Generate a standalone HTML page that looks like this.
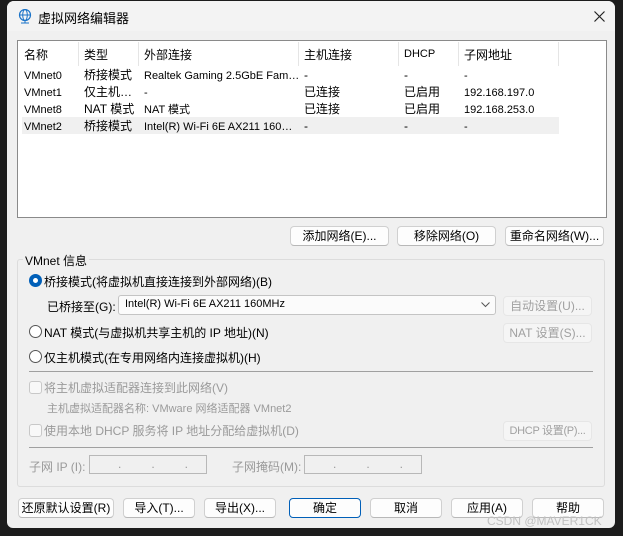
<!DOCTYPE html>
<html><head><meta charset="utf-8"><style>
*{box-sizing:border-box;margin:0;padding:0}
body{width:623px;height:536px;background:#1c1c1c;position:relative;overflow:hidden;font-family:"Liberation Sans","Noto Sans CJK SC",sans-serif;font-size:12px;color:#000}
.a{position:absolute;white-space:nowrap}
#win{position:absolute;left:7px;top:1px;width:608px;height:527px;background:#f0f0f0;border-radius:7px 7px 6px 6px;overflow:hidden}
#title{position:absolute;left:0;top:0;width:608px;height:30px;background:#f3f3f3}
.btn{position:absolute;height:20px;border:1px solid #d0d0d0;border-bottom-color:#b8b8b8;border-radius:4px;background:#fdfdfd;text-align:center;line-height:18px;font-size:12px;white-space:nowrap;overflow:hidden}
.dis{color:#a0a0a0;background:#f5f5f5;border-color:#e6e6e6}
.g{color:#9a9a9a}
.radio{position:absolute;width:13px;height:13px;border-radius:50%;border:1px solid #555;background:#fff}
.cb{position:absolute;width:13px;height:13px;border:1px solid #c8c8c8;border-radius:3px;background:#f8f8f8}
.inp{position:absolute;height:19px;border:1px solid #b8b8b8;background:#f0f0f0}
</style></head><body>
<div id="win">
<div id="title">
<svg class="a" style="left:11px;top:8px" width="14" height="15" viewBox="0 0 14 15"><circle cx="7" cy="6" r="5.5" fill="none" stroke="#1a73c8" stroke-width="1.2"/><ellipse cx="7" cy="6" rx="2.3" ry="5.5" fill="none" stroke="#1a73c8" stroke-width="1"/><line x1="1.5" y1="6" x2="12.5" y2="6" stroke="#1a73c8"/><line x1="7" y1="11.5" x2="7" y2="14" stroke="#1a73c8"/><line x1="3" y1="14" x2="11" y2="14" stroke="#1a73c8"/></svg>
<div class="a" style="left:31px;top:7px;font-size:13px">虚拟网络编辑器</div>
<svg class="a" style="left:587px;top:10px" width="11" height="11"><path d="M0.5 0.5L10.5 10.5M10.5 0.5L0.5 10.5" stroke="#222" stroke-width="1.2"/></svg>
</div>
<!-- list -->
<div class="a" style="left:10px;top:39px;width:590px;height:178px;background:#fff;border:1px solid #8a8a8a"></div>
<div class="a" style="left:15px;top:116px;width:537px;height:17px;background:#f0f0f0"></div>
<div class="a" style="left:71px;top:41px;width:1px;height:24px;background:#e5e5e5"></div>
<div class="a" style="left:131px;top:41px;width:1px;height:24px;background:#e5e5e5"></div>
<div class="a" style="left:291px;top:41px;width:1px;height:24px;background:#e5e5e5"></div>
<div class="a" style="left:391px;top:41px;width:1px;height:24px;background:#e5e5e5"></div>
<div class="a" style="left:451px;top:41px;width:1px;height:24px;background:#e5e5e5"></div>
<div class="a" style="left:551px;top:41px;width:1px;height:24px;background:#e5e5e5"></div>
<div class="a" style="left:17px;top:45px">名称</div><div class="a" style="left:77px;top:45px">类型</div><div class="a" style="left:137px;top:45px">外部连接</div><div class="a" style="left:297px;top:45px">主机连接</div><div class="a" style="left:397px;top:47px;font-size:11px">DHCP</div><div class="a" style="left:457px;top:45px">子网地址</div>
<div class="a" style="left:17px;top:67px;font-size:11px;line-height:17px">VMnet0<br>VMnet1<br>VMnet8<br>VMnet2</div>
<div class="a" style="left:77px;top:66px;line-height:17px">桥接模式<br>仅主机…<br>NAT 模式<br>桥接模式</div>
<div class="a" style="left:137px;top:67px;line-height:17px;font-size:11px">Realtek Gaming 2.5GbE Fam…<br>-<br>NAT 模式<br>Intel(R) Wi-Fi 6E AX211 160…</div>
<div class="a" style="left:297px;top:66px;line-height:17px">-<br>已连接<br>已连接<br>-</div>
<div class="a" style="left:397px;top:66px;line-height:17px">-<br>已启用<br>已启用<br>-</div>
<div class="a" style="left:457px;top:67px;line-height:17px;font-size:11px">-<br>192.168.197.0<br>192.168.253.0<br>-</div>
<div class="btn" style="left:283px;top:225px;width:99px">添加网络(E)...</div>
<div class="btn" style="left:390px;top:225px;width:99px">移除网络(O)</div>
<div class="btn" style="left:498px;top:225px;width:99px">重命名网络(W)...</div>
<!-- group -->
<div class="a" style="left:10px;top:258px;width:588px;height:228px;border:1px solid #dcdcdc;border-radius:3px"></div>
<div class="a" style="left:16px;top:251px;background:#f0f0f0;padding:0 2px">VMnet 信息</div>
<div class="radio" style="left:22px;top:273px;border:4px solid #005fb8"></div>
<div class="a" style="left:37px;top:272px">桥接模式(将虚拟机直接连接到外部网络)(B)</div>
<div class="a" style="left:40px;top:297px">已桥接至(G):</div>
<div class="a" style="left:111px;top:294px;width:378px;height:20px;background:#fbfbfb;border:1px solid #c4c4c4;border-radius:3px;padding:2px 0 0 6px;font-size:11px">Intel(R) Wi-Fi 6E AX211 160MHz</div>
<svg class="a" style="left:474px;top:301px" width="9" height="6"><path d="M0.5 0.5L4.5 4.5L8.5 0.5" stroke="#555" fill="none"/></svg>
<div class="btn dis" style="left:496px;top:295px;width:89px">自动设置(U)...</div>
<div class="radio" style="left:22px;top:324px"></div>
<div class="a" style="left:37px;top:323px">NAT 模式(与虚拟机共享主机的 IP 地址)(N)</div>
<div class="btn dis" style="left:496px;top:322px;width:89px">NAT 设置(S)...</div>
<div class="radio" style="left:22px;top:349px"></div>
<div class="a" style="left:37px;top:348px">仅主机模式(在专用网络内连接虚拟机)(H)</div>
<div class="a" style="left:22px;top:370px;width:564px;height:1px;background:#a0a0a0"></div>
<div class="cb" style="left:22px;top:380px"></div>
<div class="a g" style="left:37px;top:378px">将主机虚拟适配器连接到此网络(V)</div>
<div class="a g" style="left:40px;top:399px;font-size:11px">主机虚拟适配器名称: VMware 网络适配器 VMnet2</div>
<div class="cb" style="left:22px;top:423px"></div>
<div class="a g" style="left:37px;top:421px">使用本地 DHCP 服务将 IP 地址分配给虚拟机(D)</div>
<div class="btn dis" style="left:496px;top:420px;width:89px;font-size:11px;letter-spacing:-0.3px">DHCP 设置(P)...</div>
<div class="a" style="left:22px;top:446px;width:564px;height:1px;background:#a0a0a0"></div>
<div class="a g" style="left:22px;top:457px">子网 IP (I):</div>
<div class="inp" style="left:82px;top:454px;width:118px"><span class="a g" style="left:28px;top:1px">.&nbsp;&nbsp;&nbsp;&nbsp;&nbsp;&nbsp;&nbsp;&nbsp;&nbsp;.&nbsp;&nbsp;&nbsp;&nbsp;&nbsp;&nbsp;&nbsp;&nbsp;&nbsp;.</span></div>
<div class="a g" style="left:225px;top:457px">子网掩码(M):</div>
<div class="inp" style="left:297px;top:454px;width:118px"><span class="a g" style="left:28px;top:1px">.&nbsp;&nbsp;&nbsp;&nbsp;&nbsp;&nbsp;&nbsp;&nbsp;&nbsp;.&nbsp;&nbsp;&nbsp;&nbsp;&nbsp;&nbsp;&nbsp;&nbsp;&nbsp;.</span></div>
<!-- bottom -->
<div class="btn" style="left:11px;top:497px;width:96px">还原默认设置(R)</div>
<div class="btn" style="left:116px;top:497px;width:72px">导入(T)...</div>
<div class="btn" style="left:197px;top:497px;width:72px">导出(X)...</div>
<div class="btn" style="left:282px;top:497px;width:72px;border:1px solid #005fb8">确定</div>
<div class="btn" style="left:363px;top:497px;width:72px">取消</div>
<div class="btn" style="left:444px;top:497px;width:72px">应用(A)</div>
<div class="btn" style="left:525px;top:497px;width:72px">帮助</div>
</div>
<div class="a" style="left:487px;top:514px;color:#c0c0c0;font-size:12px">CSDN @MAVER1CK</div>
</body></html>
